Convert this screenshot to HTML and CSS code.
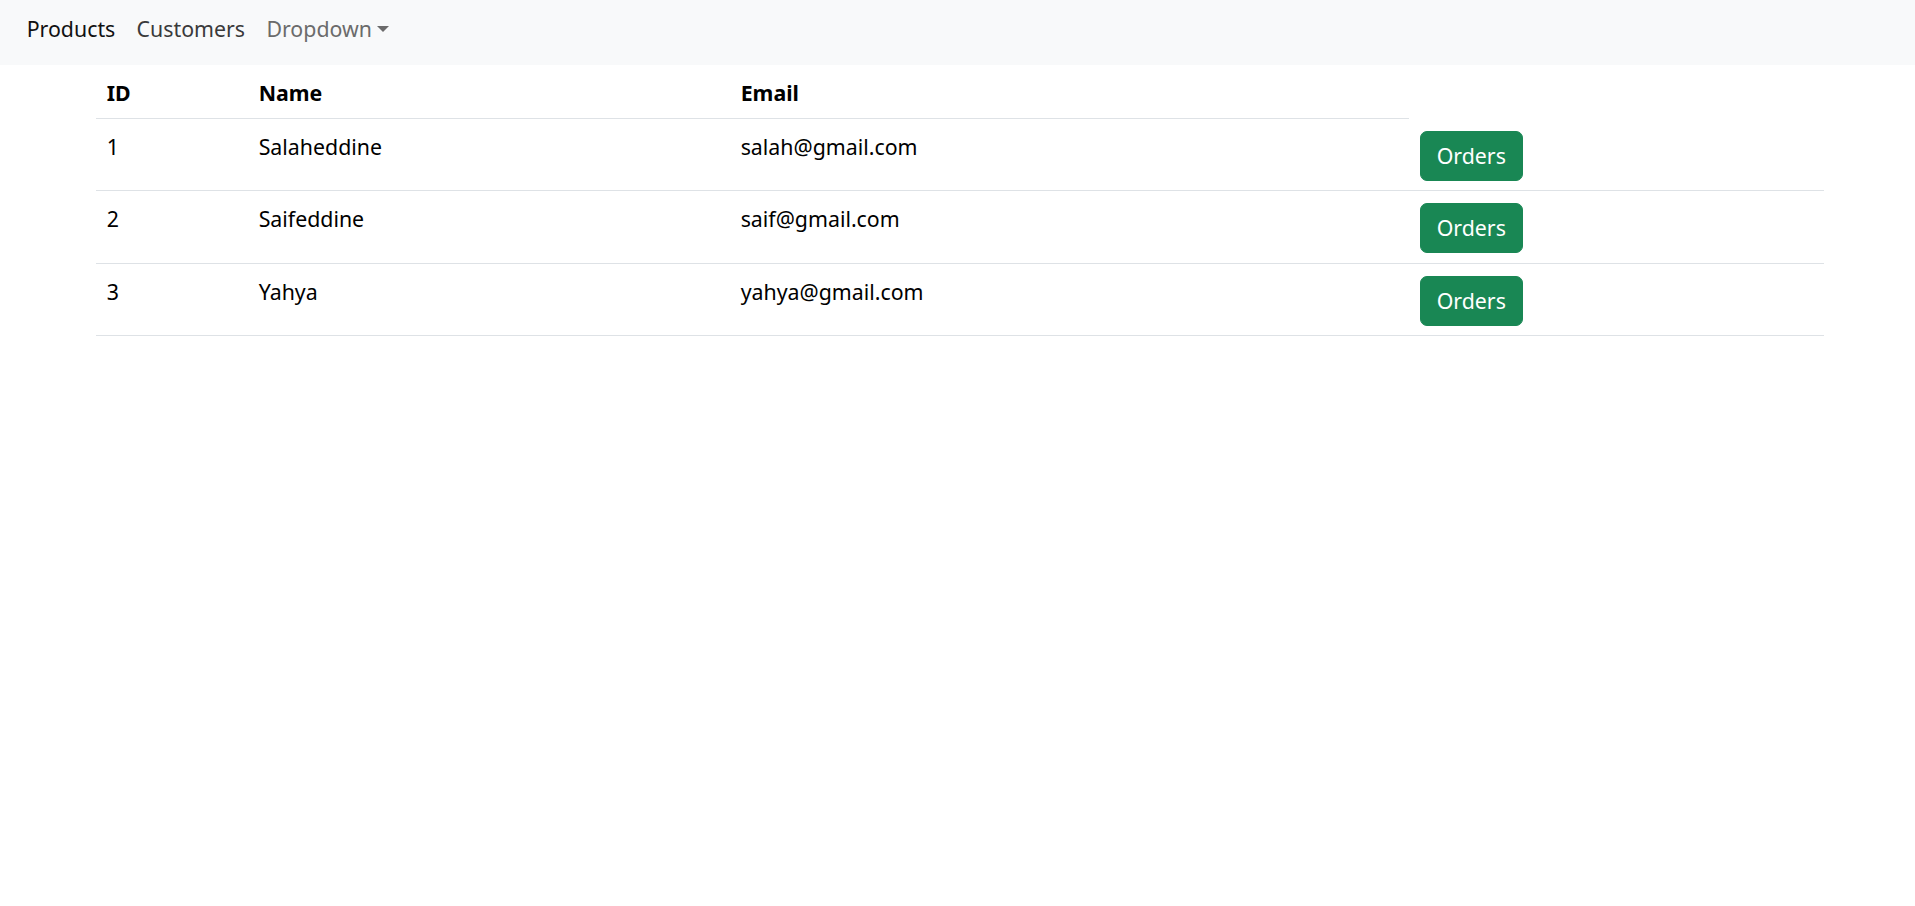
FILE: index.html
```html
<!DOCTYPE html>
<html lang="en">
<head>
    <meta charset="UTF-8">
    <meta name="viewport" content="width=device-width, initial-scale=1.0">
    <title>Customers</title>
    <link rel="stylesheet" href="styles.css">
</head>
<body>
    <nav class="navbar">
        <ul class="nav-links">
            <li><a href="#" class="nav-link active">Products</a></li>
            <li><a href="#" class="nav-link hover">Customers</a></li>
            <li><a href="#" class="nav-link dropdown-toggle">Dropdown</a></li>
        </ul>
    </nav>

    <div class="container">
        <table class="table">
            <colgroup>
                <col class="col-id">
                <col class="col-name">
                <col class="col-email">
                <col class="col-action">
            </colgroup>
            <thead>
                <tr>
                    <th>ID</th>
                    <th>Name</th>
                    <th>Email</th>
                </tr>
            </thead>
            <tbody>
                <tr>
                    <td>1</td>
                    <td>Salaheddine</td>
                    <td>salah@gmail.com</td>
                    <td><button class="btn-success">Orders</button></td>
                </tr>
                <tr>
                    <td>2</td>
                    <td>Saifeddine</td>
                    <td>saif@gmail.com</td>
                    <td><button class="btn-success">Orders</button></td>
                </tr>
                <tr>
                    <td>3</td>
                    <td>Yahya</td>
                    <td>yahya@gmail.com</td>
                    <td><button class="btn-success">Orders</button></td>
                </tr>
            </tbody>
        </table>
    </div>
</body>
</html>
```

FILE: styles.css
```css
* {
    margin: 0;
    padding: 0;
    box-sizing: border-box;
}

body {
    font-family: "Noto Sans", "Open Sans", sans-serif;
    font-size: 21.33px;
    line-height: 1.5;
    color: #212529;
    background-color: #fff;
}

/* navbar */
.navbar {
    background-color: #f8f9fa;
    height: 65px;
    padding: 13px 16px 0;
}

.nav-links {
    display: flex;
    list-style: none;
}

.nav-link {
    display: block;
    padding: 0 10.67px;
    color: #6b6b6b;
    text-decoration: none;
}

.nav-link.active {
    color: #111;
}

.nav-link.hover {
    color: #3a3a3a;
}

.dropdown-toggle::after {
    content: "";
    display: inline-block;
    margin-left: 5px;
    vertical-align: 5px;
    border-top: 6px solid;
    border-left: 6px solid transparent;
    border-right: 6px solid transparent;
}

/* table */
.container {
    width: 1728px;
    margin-left: 96px;
}

.table {
    width: 100%;
    border-collapse: collapse;
    table-layout: fixed;
    color: #000;
}

.col-id { width: 152px; }
.col-name { width: 482px; }
.col-email { width: 679px; }
.col-action { width: 415px; }

.table th,
.table td {
    padding: 10.67px;
    text-align: left;
    vertical-align: top;
    border-bottom: 1px solid #dee2e6;
}

.table th {
    font-weight: 700;
    padding-top: 12px;
    padding-bottom: 9.3px;
}

.table td {
    padding-top: 12px;
    padding-bottom: 9.5px;
}

.btn-success {
    font-family: inherit;
    font-size: 21.33px;
    line-height: 1.5;
    color: #fff;
    background-color: #198754;
    border: 1px solid #198754;
    border-radius: 7px;
    padding: 8px 16px;
    cursor: pointer;
}
```
